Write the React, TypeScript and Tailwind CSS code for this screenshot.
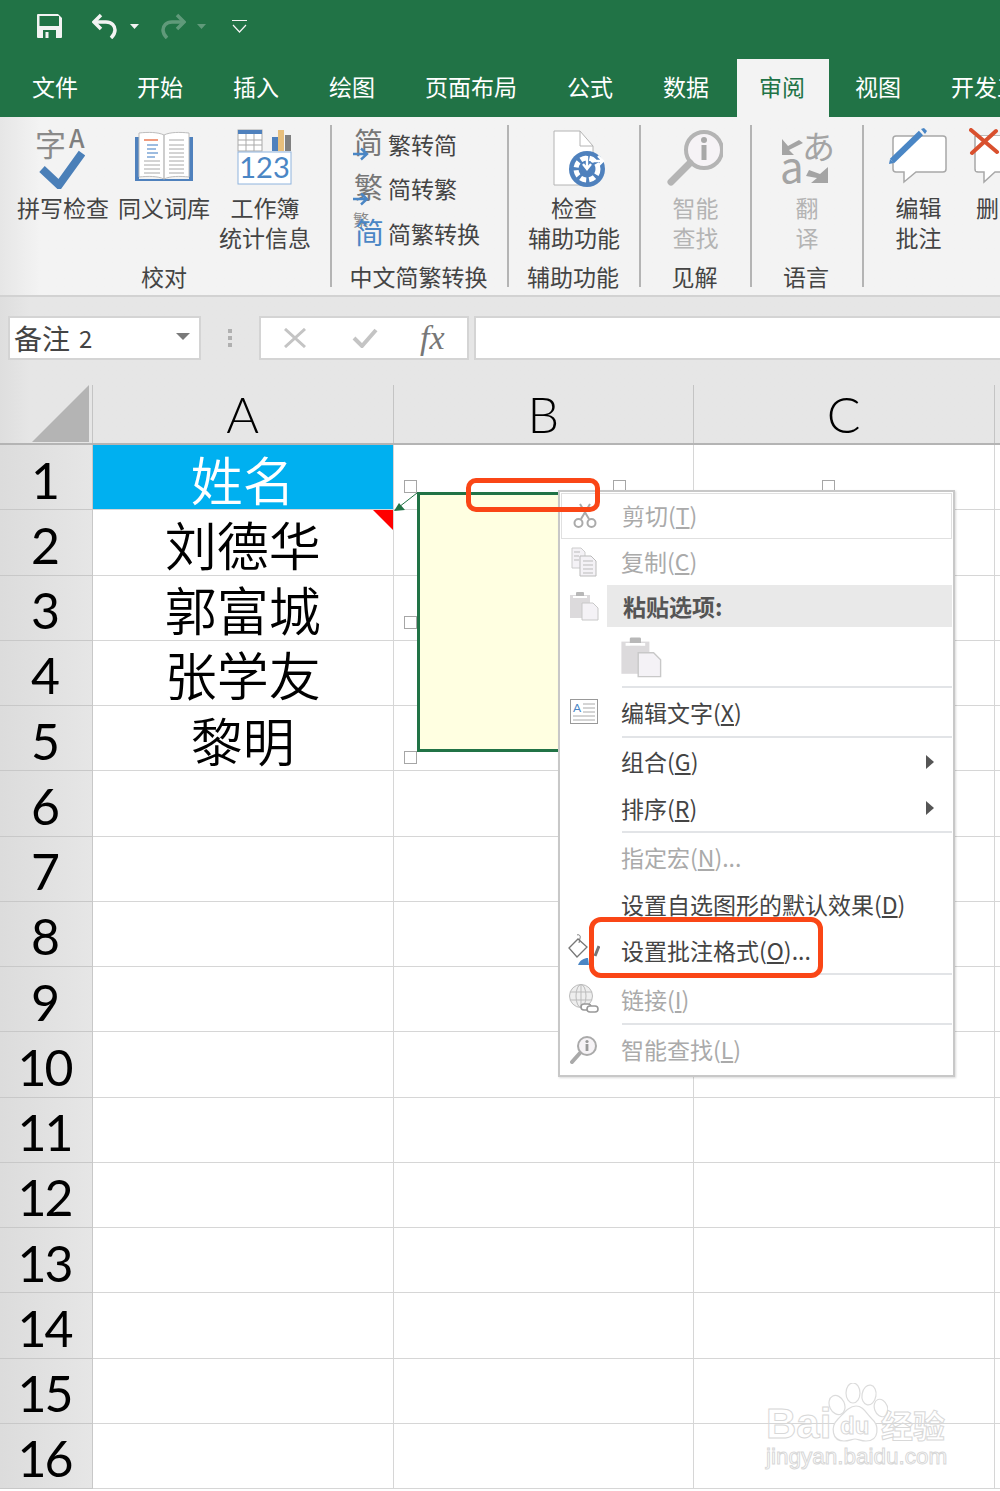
const font = "font-['Noto_Sans_CJK_SC','Liberation_Sans',sans-serif]";
const numFont = "font-['Lato','Liberation_Sans',sans-serif]";

const tabs = ["文件", "开始", "插入", "绘图", "页面布局", "公式", "数据", "审阅", "视图", "开发工具"];
const rowData = ["姓名", "刘德华", "郭富城", "张学友", "黎明"];
const rowNumbers = Array.from({ length: 16 }, (_, i) => i + 1);

function Sep() {
  return <div className="mt-2 h-[162px] w-[2px] shrink-0 bg-[#b4b4b4]" />;
}

function BigButton({
  icon,
  lines,
  width,
  disabled,
}: {
  icon: React.ReactNode;
  lines: string[];
  width: number;
  disabled?: boolean;
}) {
  return (
    <div className="flex shrink-0 flex-col items-center" style={{ width }}>
      <div className="flex h-[75px] items-end justify-center">{icon}</div>
      <div className={`whitespace-nowrap text-center text-[23px] leading-[30px] ${disabled ? "text-[#b4b4b4]" : "text-[#444]"}`}>
        {lines.map((l) => (
          <div key={l}>{l}</div>
        ))}
      </div>
    </div>
  );
}

function Group({ width, label, children }: { width: number; label?: string; children: React.ReactNode }) {
  return (
    <div className="flex h-full shrink-0 flex-col" style={{ width }}>
      <div className="flex h-[144px]">{children}</div>
      {label && <div className="pr-[2px] text-center text-[23px] leading-[30px] text-[#444]">{label}</div>}
    </div>
  );
}

function SmallButton({ icon, label }: { icon: React.ReactNode; label: string }) {
  return (
    <div className="flex h-[44.5px] items-center">
      <div className="relative h-[36px] w-[36px] shrink-0">{icon}</div>
      <span className="text-[23px] leading-none text-[#444]">{label}</span>
    </div>
  );
}

function ArrowBlue() {
  return (
    <svg width="18" height="14" viewBox="0 0 18 14" className="absolute bottom-[1px] left-0">
      <path d="M1 7h14M9 1.500 15 7l-6 5.500" fill="none" stroke="#4a86c5" strokeWidth="2.400" />
    </svg>
  );
}

function ConvertIcon({ char }: { char: string }) {
  return (
    <>
      <span className="absolute left-[2px] top-[-3px] text-[29px] leading-[36px] text-[#777]">{char}</span>
      <ArrowBlue />
    </>
  );
}

function SpellIcon() {
  return (
    <div className="relative h-[64px] w-[54px]">
      <span className="absolute left-[-1px] top-[-3px] text-[31px] leading-[36px] text-[#8a8a8a]">字</span>
      <span className="absolute left-[33px] top-[-7px] text-[25px] font-medium leading-[32px] text-[#7f7f7f]">A</span>
      <svg width="46" height="40" viewBox="0 0 46 40" className="absolute left-[3px] top-[21px]">
        <path d="M3 20 20 36 43 4" fill="none" stroke="#4a7fb8" strokeWidth="8" />
      </svg>
    </div>
  );
}

function BookIcon() {
  return (
    <svg width="58" height="52" viewBox="0 0 58 52" className="mb-[9px]">
      <path d="M0 6h4v42h50V6h4v44H0z" fill="#4f81bd" />
      <path d="M4 2c9-1 19-1 25 2v44c-6-3-16-3-25-2zM54 2c-9-1-19-1-25 2v44c6-3 16-3 25-2z" fill="#fff" stroke="#bdbdbd" />
      <path d="M9 9h14" stroke="#e8663c" strokeWidth="1.300" />
      <path d="M12 14h11M12 18h9M12 22h11M12 26h8" stroke="#7ea6d6" strokeWidth="1.300" />
      <path d="M9 30h16M9 34h16M9 38h16M9 42h16M34 9h15M34 14h15M34 18h15M34 22h15M34 26h15M34 30h15M34 34h15M34 38h15M34 42h15" stroke="#a8a8a8" strokeWidth="1" />
    </svg>
  );
}

function StatsIcon() {
  return (
    <svg width="56" height="56" viewBox="0 0 56 56" className="mb-[7px]">
      <rect x="1" y="1" width="24" height="21" fill="#fff" stroke="#a9a9a9" />
      <rect x="1" y="1" width="24" height="4" fill="#4f81bd" />
      <path d="M1 11h24M1 16h24M9 5v17M17 5v17" stroke="#a9a9a9" strokeWidth="1" />
      <rect x="35" y="8" width="6" height="14" fill="#4f81bd" />
      <rect x="41" y="1" width="6" height="21" fill="#e8bf7c" />
      <rect x="48" y="6" width="6" height="16" fill="#808080" />
      <rect x="1" y="23" width="53" height="32" fill="#fff" stroke="#8fb4de" />
      <text x="27.500" y="49" textAnchor="middle" fontSize="29" fill="#4a86c5" fontFamily="Lato, sans-serif">123</text>
    </svg>
  );
}

function AccessIcon() {
  return (
    <svg width="54" height="58" viewBox="0 0 54 58" className="mb-[4px] ml-[12px]">
      <path d="M1 1h26l13 15v39H1z" fill="#fff" stroke="#b4b4b4" />
      <path d="M27 1v15h13" fill="none" stroke="#b4b4b4" />
      <circle cx="34" cy="39" r="18" fill="#4f81bd" />
      <circle cx="34" cy="39" r="11" fill="none" stroke="#fff" strokeWidth="5" strokeDasharray="6 3" />
      <circle cx="34" cy="39" r="6" fill="#4f81bd" />
      <path d="M34 26v13M30 34l4 5 4-5M38 31h12M45 26l5 5-5 5" fill="none" stroke="#fff" strokeWidth="2.400" />
    </svg>
  );
}

function LookupIcon() {
  return (
    <svg width="56" height="56" viewBox="0 0 56 56" className="-ml-[2px] mb-[6px]">
      <circle cx="37" cy="20" r="18" fill="#f6f3f6" stroke="#b4b4b4" strokeWidth="4" />
      <path d="M23 33 4 52" stroke="#b4b4b4" strokeWidth="7" strokeLinecap="round" />
      <circle cx="37" cy="10" r="3" fill="#a8a8a8" />
      <rect x="34.500" y="15" width="5" height="15" fill="#a8a8a8" />
    </svg>
  );
}

function TranslateIcon() {
  return (
    <div className="relative mb-[5px] h-[56px] w-[50px]">
      <span className="absolute left-[20px] top-[-5px] text-[33px] leading-[38px] text-[#a4a4a4]">あ</span>
      <span className="absolute left-[-2px] top-[12px] text-[42px] leading-[44px] text-[#a4a4a4]">a</span>
      <svg width="50" height="56" viewBox="0 0 50 56" className="absolute left-0 top-0">
        <path d="M0 8v16h12l-5-5 14-7-4-3-11 6z" fill="#a4a4a4" />
        <path d="M46 36v16H29l6-5-11-2 3-6 11 4z" fill="#a4a4a4" />
      </svg>
    </div>
  );
}

function EditCommentIcon() {
  return (
    <svg width="60" height="58" viewBox="0 0 60 58" className="mb-[6px]">
      <path d="M7 8h47a3 3 0 0 1 3 3v30a3 3 0 0 1-3 3H27L15 54V44H7a3 3 0 0 1-3-3V11a3 3 0 0 1 3-3z" fill="#fff" stroke="#a8a8a8" strokeWidth="1.500" />
      <path d="M3 33 32 5" stroke="#4a86c5" strokeWidth="6" />
      <path d="M32 1l3-1 3 3-2 3z" fill="#4a86c5" />
      <path d="M0 36l1-5 4 4z" fill="#4a86c5" />
    </svg>
  );
}

function DeleteCommentIcon() {
  return (
    <svg width="32" height="58" viewBox="0 0 32 58" className="mb-[6px] -translate-x-[3px]">
      <path d="M6 8h26M6 8v33a3 3 0 0 0 3 3h6v10l11-10h6" fill="#fff" stroke="#a8a8a8" strokeWidth="1.500" />
      <rect x="7" y="8" width="25" height="35" fill="#fff" />
      <path d="M2 2 28 24M27 3 3 25" stroke="#d9502e" strokeWidth="4" strokeLinecap="round" />
    </svg>
  );
}

function Handle({ className }: { className: string }) {
  return <div className={`absolute h-[13px] w-[13px] border border-[#a6a6a6] bg-white ${className}`} />;
}

function ClipboardIcon({ large }: { large?: boolean }) {
  return (
    <svg viewBox="0 0 30 30" width={large ? 42 : 30} height={large ? 44 : 30}>
      <rect x="1" y="4" width="20" height="23" fill="#dcdadc" />
      <rect x="7" y="1" width="8" height="6" rx="1" fill="#b8b8b8" />
      <rect x="4" y="5" width="14" height="2" fill="#fff" />
      <path d="M13 12h11l5 5v12H13z" fill="#f4f2f6" stroke="#c8c8c8" />
    </svg>
  );
}

type MenuRow = {
  h: number;
  label?: React.ReactNode;
  disabled?: boolean;
  icon?: React.ReactNode;
  arrow?: boolean;
  sep?: boolean;
  bold?: boolean;
};

const Key = ({ c }: { c: string }) => <span className="underline underline-offset-2">{c}</span>;

const menuRows: MenuRow[] = [
  {
    h: 46,
    label: <>剪切(<Key c="T" />)</>,
    disabled: true,
    icon: (
      <svg width="24" height="26" viewBox="0 0 24 26">
        <circle cx="5.500" cy="20" r="4" fill="none" stroke="#aaa" strokeWidth="2" />
        <circle cx="18.500" cy="20" r="4" fill="none" stroke="#aaa" strokeWidth="2" />
        <path d="M8 16 17 1M16 16 7 1" stroke="#aaa" strokeWidth="2" />
      </svg>
    ),
  },
  {
    h: 46,
    label: <>复制(<Key c="C" />)</>,
    disabled: true,
    icon: (
      <svg width="26" height="30" viewBox="0 0 26 30">
        <path d="M1 1h9l4 4v16H1z" fill="#f4f2f6" stroke="#ccc" />
        <path d="M9 9h11l5 5v15H9z" fill="#f4f2f6" stroke="#bbb" />
        <path d="M3 5h6M3 9h5M3 13h5M12 14h10M12 18h10M12 22h10M12 26h10" stroke="#bbb" />
      </svg>
    ),
  },
  { h: 42, label: "粘贴选项:", bold: true, icon: <ClipboardIcon /> },
  { h: 59 },
  { h: 2, sep: true },
  {
    h: 48,
    label: <>编辑文字(<Key c="X" />)</>,
    icon: (
      <svg width="28" height="26" viewBox="0 0 28 26">
        <rect x="0.500" y="0.500" width="27" height="24" fill="#fff" stroke="#999" />
        <text x="3" y="13" fontSize="12" fill="#4a86c5" fontFamily="Lato, sans-serif">A</text>
        <path d="M13 5h12M13 9h12M13 13h12M3 17h22M3 21h22" stroke="#aaa" />
      </svg>
    ),
  },
  { h: 2, sep: true },
  { h: 47, label: <>组合(<Key c="G" />)</>, arrow: true },
  { h: 46, label: <>排序(<Key c="R" />)</>, arrow: true },
  { h: 2, sep: true },
  { h: 48, label: <>指定宏(<Key c="N" />)...</>, disabled: true },
  { h: 46, label: <>设置自选图形的默认效果(<Key c="D" />)</> },
  {
    h: 46,
    label: <>设置批注格式(<Key c="O" />)...</>,
    icon: (
      <svg width="32" height="32" viewBox="0 0 32 32">
        <path d="M1 14 10 5l9 8-10 10z" fill="#fff" stroke="#777" strokeWidth="1.300" />
        <path d="M9 1c2-1 4 1 3 3l-1 5" fill="none" stroke="#777" />
        <path d="M10 31c2-5 6-7 10-7l1 7z" fill="#4a86c5" />
        <path d="M27 22 31 12" stroke="#777" strokeWidth="3" />
      </svg>
    ),
  },
  { h: 2, sep: true },
  {
    h: 48,
    label: <>链接(<Key c="I" />)</>,
    disabled: true,
    icon: (
      <svg width="30" height="30" viewBox="0 0 30 30">
        <circle cx="12" cy="12" r="11.500" fill="#eee" stroke="#bbb" />
        <ellipse cx="12" cy="12" rx="5" ry="11.500" fill="none" stroke="#bbb" />
        <path d="M1 8h22M1 16h22M12 1v22" stroke="#bbb" />
        <rect x="12" y="20" width="10" height="6" rx="3" fill="#fff" stroke="#999" strokeWidth="1.600" />
        <rect x="18" y="22" width="11" height="6" rx="3" fill="#fff" stroke="#999" strokeWidth="1.600" />
      </svg>
    ),
  },
  { h: 2, sep: true },
  {
    h: 49,
    label: <>智能查找(<Key c="L" />)</>,
    disabled: true,
    icon: (
      <svg width="28" height="28" viewBox="0 0 28 28">
        <circle cx="17" cy="10" r="9" fill="#f6f3f6" stroke="#aaa" strokeWidth="2" />
        <path d="M10 17 2 26" stroke="#aaa" strokeWidth="4" strokeLinecap="round" />
        <circle cx="17" cy="5.500" r="1.600" fill="#999" />
        <rect x="15.600" y="8" width="2.800" height="7" fill="#999" />
      </svg>
    ),
  },
];

function ContextMenu() {
  return (
    <div className="absolute left-[558px] top-[490px] w-[397px] border-2 border-[#c8c8c8] bg-white p-[1px] shadow-[1px_1px_2px_rgba(0,0,0,0.15)]">
      {menuRows.map((row, i) => {
        if (row.sep) {
          return (
            <div key={i} className="flex items-center pl-[61px]" style={{ height: row.h }}>
              <div className="h-[2px] w-full bg-[#e2e4e7]" />
            </div>
          );
        }
        return (
          <div
            key={i}
            className={`flex items-center ${i === 0 ? "border border-[#e0e0e0]" : ""}`}
            style={{ height: row.h }}
          >
            <div className="flex h-full w-[46px] shrink-0 items-center justify-center">{row.icon}</div>
            {row.label ? (
              <div
                className={`flex h-full flex-1 items-center whitespace-nowrap text-[23px] leading-none ${
                  row.bold
                    ? "bg-[#e9e9e9] pl-[16px] font-bold text-[#555]"
                    : row.disabled
                      ? "pl-[14px] text-[#aaaaaa]"
                      : "pl-[14px] text-[#444]"
                } ${i < 2 ? "pb-[2px]" : ""}`}
              >
                <span>{row.label}</span>
                {row.arrow && (
                  <svg width="8" height="14" viewBox="0 0 8 14" className="ml-auto mr-[18px]">
                    <path d="M0 0 8 7 0 14z" fill="#555" />
                  </svg>
                )}
              </div>
            ) : (
              <div className="flex h-full items-center pl-[13px]">
                <ClipboardIcon large />
              </div>
            )}
          </div>
        );
      })}
    </div>
  );
}

function Watermark() {
  const outline = "text-transparent [-webkit-text-stroke:1px_#d8d8d8]";
  return (
    <div className="pointer-events-none absolute left-[766px] top-[1383px] h-[90px] w-[184px]">
      <span className={`absolute left-0 top-[16px] font-['Liberation_Sans',sans-serif] text-[42px] font-bold leading-[50px] ${outline}`}>Bai</span>
      <svg width="60" height="62" viewBox="0 0 60 62" className="absolute left-[62px] top-0">
        <g fill="#fff" stroke="#dcdcdc" strokeWidth="1.200">
          <ellipse cx="9" cy="22" rx="7.500" ry="10" transform="rotate(-25 9 22)" />
          <ellipse cx="25" cy="10" rx="7" ry="10" />
          <ellipse cx="41" cy="12" rx="7" ry="10" transform="rotate(10 41 12)" />
          <ellipse cx="53" cy="25" rx="6.500" ry="9" transform="rotate(-20 53 25)" />
          <path d="M28 23c7 0 10 7 16 13 7 6 8 22-6 22-5 0-8-2-11-2s-6 2-11 2c-12 0-14-14-6-22 6-6 11-13 18-13z" />
        </g>
      </svg>
      <span className={`absolute left-[74px] top-[28px] font-['Liberation_Sans',sans-serif] text-[24px] font-bold leading-[30px] ${outline}`}>du</span>
      <span className={`absolute left-[115px] top-[21px] text-[32px] font-bold leading-[40px] ${outline}`}>经验</span>
      <span className={`absolute left-0 top-[60px] whitespace-nowrap font-['Liberation_Sans',sans-serif] text-[22.5px] leading-[28px] ${outline}`}>jingyan.baidu.com</span>
    </div>
  );
}

export default function App() {
  return (
    <div className={`relative h-[1491px] w-[1000px] overflow-hidden bg-white ${font}`}>
      {/* title bar */}
      <div className="flex h-[59px] items-center bg-[#217346] pb-[7px] pl-[37px]">
        <svg width="25" height="24" viewBox="0 0 25 24">
          <path d="M0 1a1 1 0 0 1 1-1h20l4 4v19a1 1 0 0 1-1 1H1a1 1 0 0 1-1-1z" fill="#f3f3f3" />
          <rect x="2.500" y="2" width="19.500" height="10" fill="#217346" />
          <rect x="6" y="16" width="13" height="8" fill="#217346" />
          <rect x="8.500" y="18" width="3" height="6" fill="#f3f3f3" />
        </svg>
        <svg width="26" height="26" viewBox="0 0 26 26" className="ml-[30px]">
          <path d="M9 2 2 9l7 7" fill="none" stroke="#f3f3f3" strokeWidth="3.500" />
          <path d="M3 9h11c6 0 9 4 9 8s-2 6-4 8" fill="none" stroke="#f3f3f3" strokeWidth="3.500" />
        </svg>
        <svg width="9" height="5" viewBox="0 0 9 5" className="ml-[12px]">
          <path d="M0 0h9L4.500 5z" fill="#f3f3f3" />
        </svg>
        <svg width="26" height="26" viewBox="0 0 26 26" className="ml-[21px] opacity-30">
          <path d="M17 2l7 7-7 7" fill="none" stroke="#f3f3f3" strokeWidth="3.500" />
          <path d="M23 9H12c-6 0-9 4-9 8s2 6 4 8" fill="none" stroke="#f3f3f3" strokeWidth="3.500" />
        </svg>
        <svg width="9" height="5" viewBox="0 0 9 5" className="ml-[11px] opacity-30">
          <path d="M0 0h9L4.500 5z" fill="#f3f3f3" />
        </svg>
        <svg width="15" height="13" viewBox="0 0 15 13" className="ml-[26px]">
          <path d="M0 .5h15M1 5l6.500 7L14 5" fill="none" stroke="#f3f3f3" strokeWidth="1.200" />
        </svg>
      </div>

      {/* tabs */}
      <div className="flex h-[58px] items-stretch overflow-hidden whitespace-nowrap bg-[#217346] pl-[32px] text-[23px]">
        {tabs.map((t, i) => (
          <div
            key={t}
            className={`flex shrink-0 items-center pb-[4px] ${
              t === "审阅"
                ? "-ml-[22px] mr-[26px] bg-[#f3f3f3] pl-[22px] pr-[24px] text-[#217346]"
                : `${i === 0 ? "mr-[59px]" : "mr-[50px]"} text-white`
            }`}
          >
            {t}
          </div>
        ))}
      </div>

      {/* ribbon */}
      <div className="flex h-[180px] overflow-hidden border-b-2 border-[#d2d2d2] bg-linear-to-r from-[#e6e6e6] to-[#f3f3f3] to-[4%]">
        <Group width={330} label="校对">
          <div className="flex pl-[13px]">
            <BigButton width={100} lines={["拼写检查"]} icon={<SpellIcon />} />
            <BigButton width={102} lines={["同义词库"]} icon={<BookIcon />} />
            <BigButton width={100} lines={["工作簿", "统计信息"]} icon={<StatsIcon />} />
          </div>
        </Group>
        <Sep />
        <Group width={175} label="中文简繁转换">
          <div className="flex flex-col pl-[20px] pt-[5px]">
            <SmallButton label="繁转简" icon={<ConvertIcon char="简" />} />
            <SmallButton label="简转繁" icon={<ConvertIcon char="繁" />} />
            <SmallButton
              label="简繁转换"
              icon={
                <>
                  <span className="absolute left-[1px] top-[-6px] text-[16px] leading-[20px] text-[#888]">繁</span>
                  <span className="absolute left-[3px] top-[-2px] text-[29px] leading-[36px] text-[#4a86c5]">简</span>
                </>
              }
            />
          </div>
        </Group>
        <Sep />
        <Group width={130} label="辅助功能">
          <BigButton width={130} lines={["检查", "辅助功能"]} icon={<AccessIcon />} />
        </Group>
        <Sep />
        <Group width={109} label="见解">
          <BigButton width={109} disabled lines={["智能", "查找"]} icon={<LookupIcon />} />
        </Group>
        <Sep />
        <Group width={110} label="语言">
          <BigButton width={110} disabled lines={["翻", "译"]} icon={<TranslateIcon />} />
        </Group>
        <Sep />
        <Group width={138}>
          <div className="flex">
            <BigButton width={109} lines={["编辑", "批注"]} icon={<EditCommentIcon />} />
            <BigButton width={29} lines={["删"]} icon={<DeleteCommentIcon />} />
          </div>
        </Group>
      </div>

      {/* formula bar */}
      <div className="flex h-[88px] items-start bg-linear-to-r from-[#dedede] to-[#e6e6e6] to-[3%] pl-[8px] pt-[19px]">
        <div className="flex h-[44px] w-[193px] items-center border-2 border-[#d4d4d4] bg-white pl-[4px] pr-[9px]">
          <span className="text-[28px] leading-none text-[#444]">备注</span>
          <span className="ml-[9px] text-[24px] leading-none text-[#444]">2</span>
          <svg width="14" height="7" viewBox="0 0 14 7" className="mb-[3px] ml-auto">
            <path d="M0 0h14L7 7z" fill="#7a7a7a" />
          </svg>
        </div>
        <div className="ml-[27px] flex h-[44px] w-[4px] flex-col items-center justify-center gap-[3px]">
          <div className="h-[4px] w-[4px] bg-[#b0b0b0]" />
          <div className="h-[4px] w-[4px] bg-[#b0b0b0]" />
          <div className="h-[4px] w-[4px] bg-[#b0b0b0]" />
        </div>
        <div className="ml-[27px] flex h-[44px] w-[210px] items-center border-2 border-[#d4d4d4] bg-white pl-[23px]">
          <svg width="22" height="20" viewBox="0 0 22 20">
            <path d="M1 1l20 18M21 1 1 19" stroke="#c4c4c4" strokeWidth="3" />
          </svg>
          <svg width="26" height="20" viewBox="0 0 26 20" className="ml-[46px]">
            <path d="M2 10l8 8L24 2" fill="none" stroke="#c4c4c4" strokeWidth="4" />
          </svg>
          <span className="ml-[42px] font-['Liberation_Serif',serif] text-[34px] italic leading-none text-[#777]">fx</span>
        </div>
        <div className="ml-[5px] h-[44px] flex-1 border-y-2 border-l-2 border-[#d4d4d4] bg-white" />
      </div>

      {/* column headers */}
      <div className="flex h-[60px] border-b-2 border-[#b4b4b4] bg-linear-to-r from-[#dedede] to-[#e6e6e6] to-[3%]">
        <div className="relative w-[93px] shrink-0 border-r border-[#c4c4c4]">
          <svg width="58" height="57" viewBox="0 0 58 57" className="absolute left-[32px] top-0">
            <path d="M57 0v57H0z" fill="#b4b4b4" />
          </svg>
        </div>
        {["A", "B", "C"].map((c) => (
          <div
            key={c}
            className={`flex w-[300.5px] shrink-0 items-center justify-center border-r border-[#c4c4c4] ${numFont} text-[50px] font-light leading-none text-black`}
          >
            {c}
          </div>
        ))}
      </div>

      {/* rows */}
      <div>
        {rowNumbers.map((n) => (
          <div key={n} className="flex h-[65.25px]">
            <div
              className={`flex w-[93px] shrink-0 items-center justify-center border-r border-b border-[#c8c8c8] bg-linear-to-r from-[#dcdcdc] to-[#e6e6e6] pr-[3px] pt-[5px] ${numFont} text-[50px] leading-none tracking-[-2px] text-black`}
            >
              {n}
            </div>
            <div
              className={`flex w-[300.5px] shrink-0 items-center justify-center border-r border-b border-[#d6d6d6] pt-[3px] text-[52px] font-[350] leading-none ${
                n === 1 ? "bg-[#00b0f0] text-white" : "text-black"
              }`}
            >
              {rowData[n - 1]}
            </div>
            <div className="w-[300.5px] shrink-0 border-r border-b border-[#d6d6d6]" />
            <div className="w-[300.5px] shrink-0 border-r border-b border-[#d6d6d6]" />
            <div className="flex-1 border-b border-[#d6d6d6]" />
          </div>
        ))}
      </div>

      {/* comment indicator */}
      <svg width="21" height="21" viewBox="0 0 21 21" className="absolute left-[373px] top-[510px]">
        <path d="M0 0h20v20z" fill="#ff0000" />
      </svg>

      {/* comment box with handles */}
      <div className="absolute left-[417px] top-[492px] h-[260px] w-[412px] border-[3px] border-[#217346] bg-[#ffffe1]" />
      <svg width="26" height="22" viewBox="0 0 26 22" className="absolute left-[393px] top-[491px]">
        <path d="M24 2 6 16" stroke="#217346" strokeWidth="1" />
        <path d="M1 20 12 19 6 12z" fill="#217346" />
      </svg>
      <Handle className="left-[404px] top-[480px]" />
      <Handle className="left-[613px] top-[480px]" />
      <Handle className="left-[822px] top-[480px]" />
      <Handle className="left-[404px] top-[616px]" />
      <Handle className="left-[404px] top-[751px]" />

      <ContextMenu />

      {/* red annotations */}
      <div className="absolute left-[466px] top-[478px] h-[34px] w-[134px] rounded-[10px] border-[5px] border-[#fa4616]" />
      <div className="absolute left-[589px] top-[917px] h-[61px] w-[234px] rounded-[12px] border-[5px] border-[#fa4616]" />

      <Watermark />
    </div>
  );
}
